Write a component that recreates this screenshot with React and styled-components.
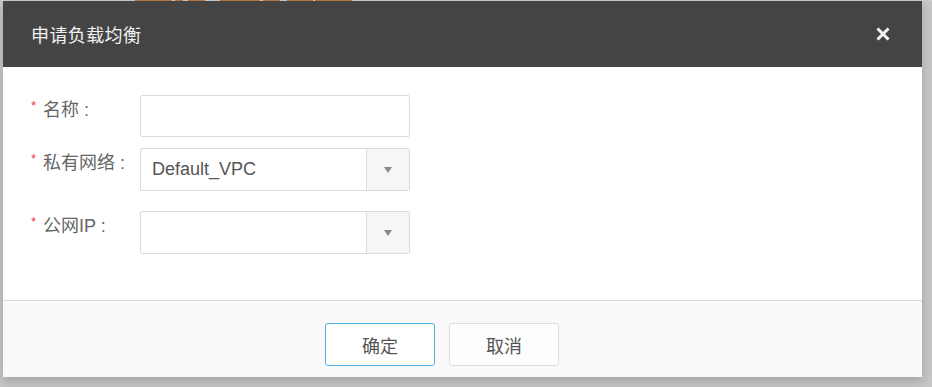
import React from "react";
import styled, { createGlobalStyle } from "styled-components";

const Global = createGlobalStyle`
  html, body { margin: 0; padding: 0; }
  body {
    background: #c6c6c6;
    font-family: "Liberation Sans", "Noto Sans CJK SC", sans-serif;
  }
`;

const Backdrop = styled.div`
  width: 932px;
  height: 387px;
  overflow: hidden;
  background: #c6c6c6;
  display: flex;
  flex-direction: column;
`;

const TopStrip = styled.div`
  height: 1px;
  display: flex;
  background: #cdcdcd;
`;

const StripPiece = styled.span`
  height: 1px;
  margin-left: ${(p) => p.$gap}px;
  width: ${(p) => p.$w}px;
  background: #b87a46;
`;

const Dialog = styled.div`
  margin-left: 3px;
  width: 919px;
  display: flex;
  flex-direction: column;
  background: #fff;
  box-shadow: 0 4px 10px rgba(0, 0, 0, 0.18);
`;

const Header = styled.div`
  height: 66px;
  background: #444444;
  display: flex;
  align-items: center;
  justify-content: space-between;
  padding: 0 32px 0 28px;
`;

const Title = styled.h2`
  margin: 0;
  font-size: 18px;
  font-weight: normal;
  color: #f2f2f2;
  letter-spacing: 0.4px;
`;

const Close = styled.button`
  border: 0;
  background: none;
  padding: 0;
  width: 14px;
  height: 14px;
  display: flex;
  cursor: pointer;
`;

const Body = styled.div`
  height: 233px;
  padding: 28px 0 0 28px;
  box-sizing: border-box;
  display: flex;
  flex-direction: column;
`;

const Row = styled.div`
  display: flex;
  align-items: flex-start;
  margin-bottom: ${(p) => p.$mb || 0}px;
`;

const Label = styled.label`
  width: 109px;
  padding-top: 3px;
  display: flex;
  align-items: flex-start;
  font-size: 18px;
  line-height: 24px;
  color: #666;
`;

const Star = styled.span`
  color: #e8403a;
  font-size: 13px;
  line-height: 16px;
  width: 12px;
  flex: none;
`;

const TextInput = styled.input`
  width: 270px;
  height: 42px;
  box-sizing: border-box;
  border: 1px solid #dadada;
  border-radius: 2px;
  padding: 0 11px;
  font: inherit;
  font-size: 18px;
  color: #555;
  outline: none;
`;

const Select = styled.div`
  width: 270px;
  height: 43px;
  box-sizing: border-box;
  border: 1px solid #dadada;
  border-radius: 2px;
  display: flex;
  align-items: stretch;
`;

const SelectValue = styled.div`
  flex: 1;
  display: flex;
  align-items: center;
  padding-left: 11px;
  font-size: 18px;
  color: #555;
`;

const SelectArrow = styled.div`
  width: 42px;
  border-left: 1px solid #dcdcdc;
  background: #f6f6f6;
  display: flex;
  align-items: center;
  justify-content: center;
`;

const Footer = styled.div`
  height: 77px;
  box-sizing: border-box;
  border-top: 1px solid #dcdcdc;
  background: #f9f9f9;
  display: flex;
  align-items: flex-start;
  gap: 14px;
  padding: 22px 0 0 322px;
`;

const Button = styled.button`
  width: 110px;
  height: 43px;
  box-sizing: border-box;
  border-radius: 3px;
  border: 1px solid ${(p) => (p.$primary ? "#52b1e4" : "#dedede")};
  background: ${(p) => (p.$primary ? "#ffffff" : "#fdfdfd")};
  font-family: "Liberation Sans", "Noto Sans CJK SC", sans-serif;
  font-size: 18px;
  color: #555;
  cursor: pointer;
  padding: 0;
`;

const Arrow = () => (
  <svg width="8" height="6" viewBox="0 0 8 6">
    <path d="M0 0 H8 L4 6 Z" fill="#8a8a8a" />
  </svg>
);

const CloseIcon = () => (
  <svg width="14" height="14" viewBox="0 0 14 14">
    <path d="M1.5 1.5 L12.5 12.5 M12.5 1.5 L1.5 12.5" stroke="#f4f4f4" strokeWidth="3" strokeLinecap="butt" />
  </svg>
);

const strip = [
  { gap: 135, w: 37 },
  { gap: 3, w: 8 },
  { gap: 5, w: 17 },
  { gap: 15, w: 40 },
  { gap: 3, w: 17 },
  { gap: 7, w: 26 },
  { gap: 2, w: 37 },
];

export default function App() {
  return (
    <>
      <Global />
      <Backdrop>
        <TopStrip>
          {strip.map((s, i) => (
            <StripPiece key={i} $gap={s.gap} $w={s.w} />
          ))}
        </TopStrip>
        <Dialog>
          <Header>
            <Title>申请负载均衡</Title>
            <Close aria-label="关闭">
              <CloseIcon />
            </Close>
          </Header>
          <Body>
            <Row $mb={11}>
              <Label>
                <Star>*</Star>名称 :
              </Label>
              <TextInput />
            </Row>
            <Row $mb={20}>
              <Label>
                <Star>*</Star>私有网络 :
              </Label>
              <Select>
                <SelectValue>Default_VPC</SelectValue>
                <SelectArrow>
                  <Arrow />
                </SelectArrow>
              </Select>
            </Row>
            <Row>
              <Label>
                <Star>*</Star>公网IP :
              </Label>
              <Select>
                <SelectValue />
                <SelectArrow>
                  <Arrow />
                </SelectArrow>
              </Select>
            </Row>
          </Body>
          <Footer>
            <Button $primary>确定</Button>
            <Button>取消</Button>
          </Footer>
        </Dialog>
      </Backdrop>
    </>
  );
}
